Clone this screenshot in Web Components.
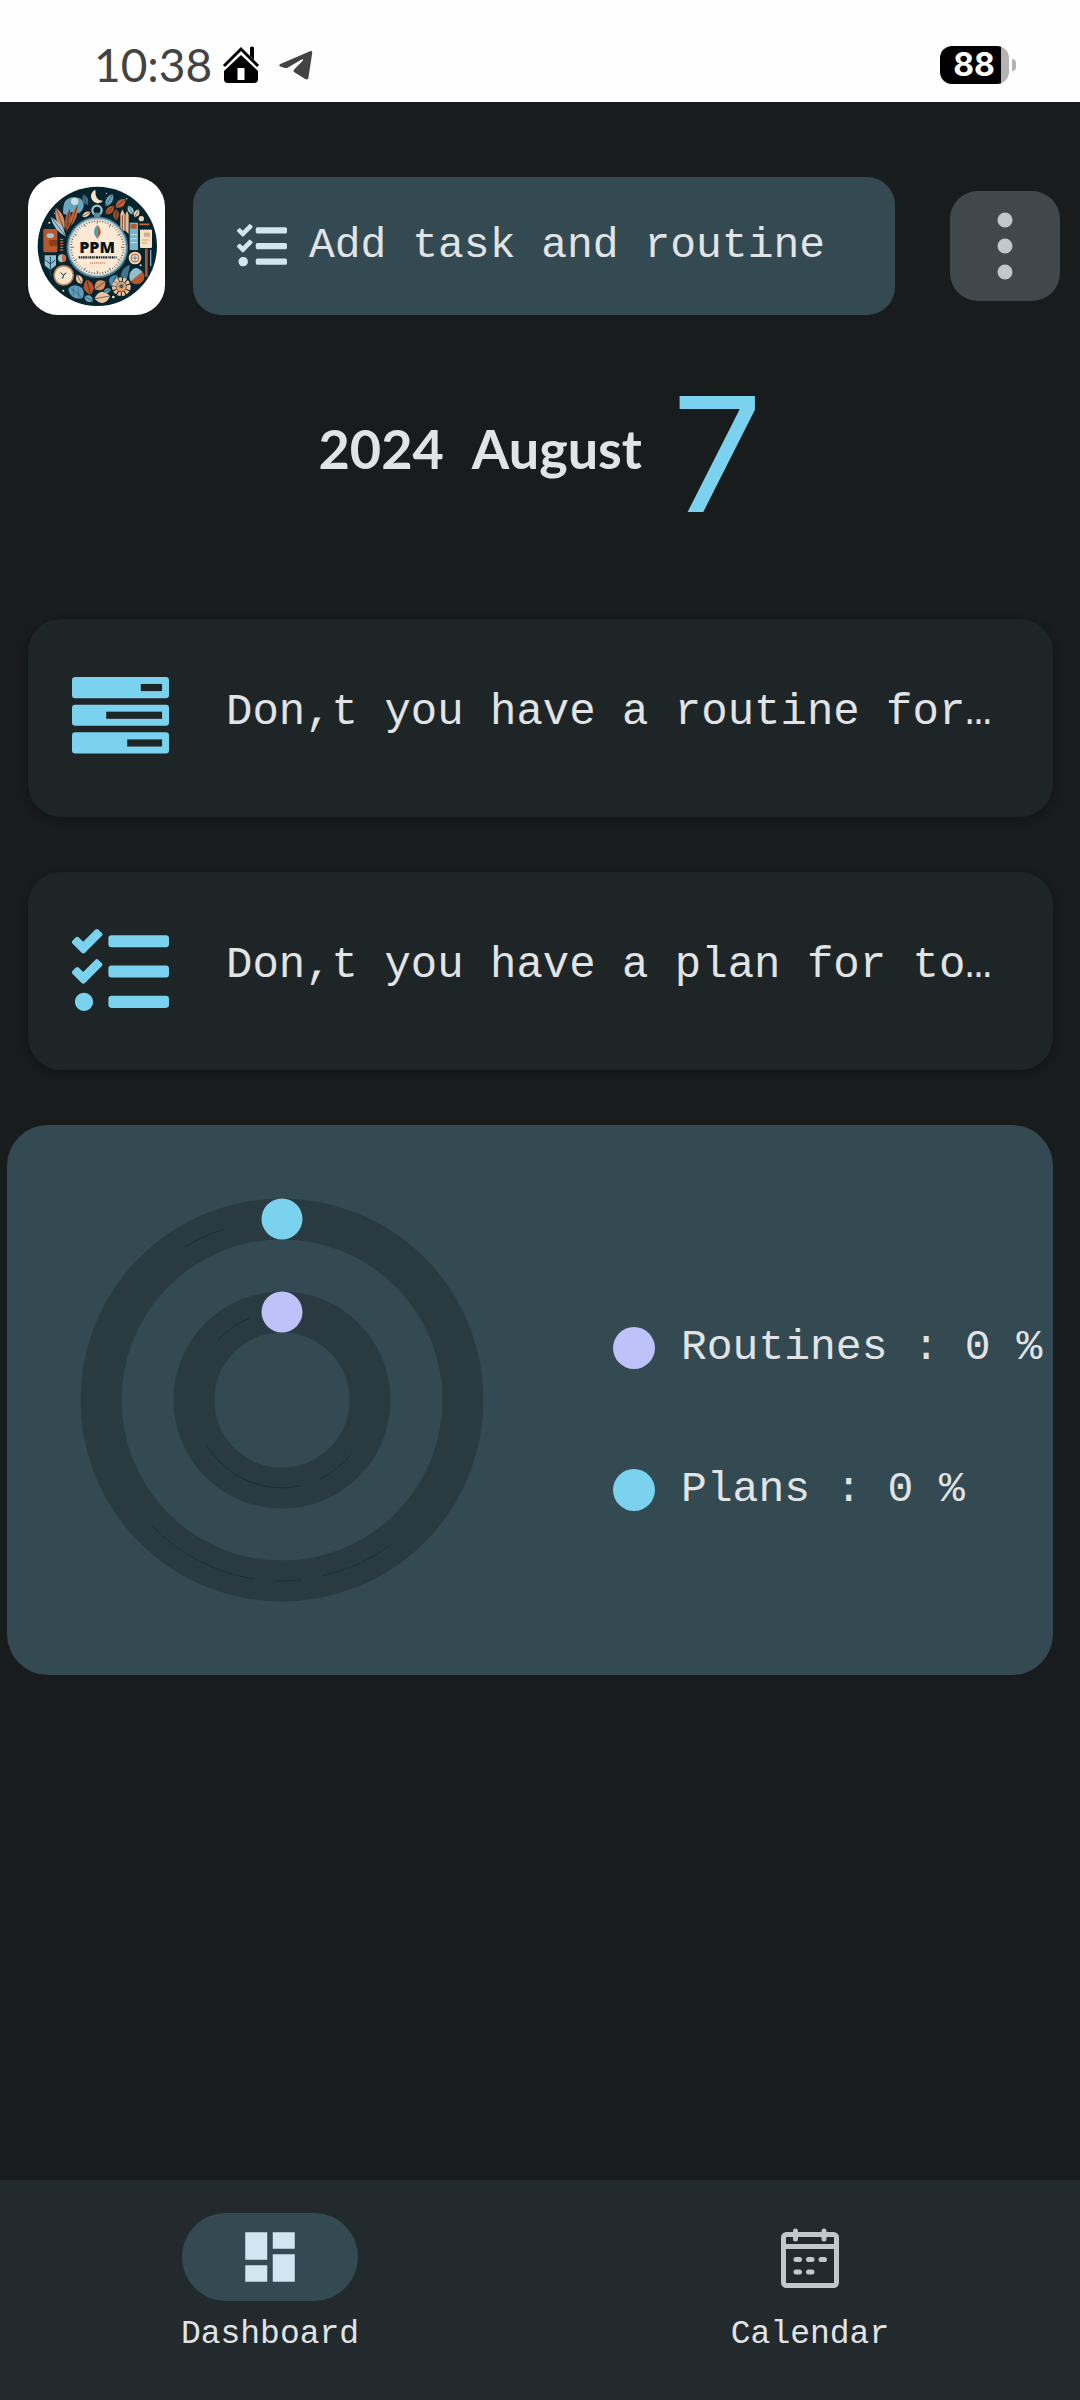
<!DOCTYPE html>
<html lang="en">
<head>
<meta charset="utf-8">
<meta name="viewport" content="width=device-width, initial-scale=1">
<title>PPM – Dashboard</title>
<style>
  :root {
    --bg: #191c1d;
    --card: #1e2527;
    --panel: #334a52;
    --nav: #222a2d;
    --ring: #2a3a41;
    --sky: #7bd2ee;
    --lilac: #bdc2f9;
    --pale: #d0e6f1;
    --muted: #c0c8cc;
    --text: #e1e3e4;
    --mono: "Liberation Mono", monospace;
    --round: Lato, sans-serif;
  }
  body { margin: 0; background: var(--bg); color: var(--text); font-family: var(--mono); }
</style>
</head>
<body>
<planner-app>
  <status-bar slot="status" time="10:38" battery="88"></status-bar>
  <app-header slot="header">Add task and routine</app-header>
  <date-title year="2024" month="August" day="7"></date-title>
  <empty-card icon="bars">Don,t you have a routine for…</empty-card>
  <empty-card icon="checks">Don,t you have a plan for to…</empty-card>
  <progress-panel>
    <legend-item>Routines : 0 %</legend-item>
    <legend-item tone="plans">Plans : 0 %</legend-item>
  </progress-panel>
  <nav-bar slot="nav">
    <nav-item icon="dashboard" href="#dashboard" active>Dashboard</nav-item>
    <nav-item icon="calendar" href="#calendar">Calendar</nav-item>
  </nav-bar>
</planner-app>

<script>
const ICONS = {
  checks: `<svg viewBox="0 0 512 512" fill="currentColor" aria-hidden="true"><path d="M139.61 35.5a12 12 0 0 0-17 0L58.93 98.81l-22.7-22.12a12 12 0 0 0-17 0L3.53 92.41a12 12 0 0 0 0 17l47.59 47.4a12.78 12.78 0 0 0 17.61 0l15.59-15.62L156.52 69a12.09 12.09 0 0 0 .09-17zm0 159.19a12 12 0 0 0-17 0l-63.68 63.72-22.7-22.1a12 12 0 0 0-17 0L3.53 252a12 12 0 0 0 0 17L51 316.5a12.77 12.77 0 0 0 17.6 0l15.7-15.69 72.2-72.22a12 12 0 0 0 .09-16.9zM64 368c-26.49 0-48.59 21.5-48.59 48S37.53 464 64 464a48 48 0 0 0 0-96zm432 16H208a16 16 0 0 0-16 16v32a16 16 0 0 0 16 16h288a16 16 0 0 0 16-16v-32a16 16 0 0 0-16-16zm0-320H208a16 16 0 0 0-16 16v32a16 16 0 0 0 16 16h288a16 16 0 0 0 16-16V80a16 16 0 0 0-16-16zm0 160H208a16 16 0 0 0-16 16v32a16 16 0 0 0 16 16h288a16 16 0 0 0 16-16v-32a16 16 0 0 0-16-16z"/></svg>`,
  bars: `<svg viewBox="0 -128 1792 1792" aria-hidden="true"><g fill="currentColor"><rect y="0" width="1792" height="392" rx="60"/><rect y="512" width="1792" height="392" rx="60"/><rect y="1024" width="1792" height="392" rx="60"/></g><g fill="var(--card)"><rect x="1272" y="130" width="392" height="132"/><rect x="632" y="642" width="1032" height="132"/><rect x="1020" y="1154" width="644" height="132"/></g></svg>`,
  dashboard: `<svg viewBox="0 0 24 24" fill="currentColor" aria-hidden="true"><path d="M3 13h8V3H3v10zm0 8h8v-6H3v6zm10 0h8V11h-8v10zm0-18v6h8V3h-8z"/></svg>`,
  calendar: `<svg viewBox="0 0 66 66" fill="none" stroke="currentColor" stroke-width="5" stroke-linecap="round" aria-hidden="true"><rect x="6.5" y="10.5" width="53" height="51" rx="3"/><path d="M6.5 22.5h53M18.5 7v8M47 7v8M19 35.5h3.5M31.5 35.5h3.5M44 35.5h3.5M19 48h3.5M31.5 48h3.5"/></svg>`
};

const define = (name, render) => customElements.define(name, class extends HTMLElement {
  connectedCallback() {
    if (this.shadowRoot) return;
    this.attachShadow({ mode: 'open' }).innerHTML = render(this);
  }
});

define('planner-app', () => `
  <style>
    :host { display: flex; flex-direction: column; min-height: 100vh; }
    main { display: flex; flex-direction: column; gap: 55px; padding: 0 27px 55px 28px; }
    ::slotted([slot="nav"]) { margin-top: auto; }
  </style>
  <slot name="status"></slot>
  <slot name="header"></slot>
  <main><slot></slot></main>
  <slot name="nav"></slot>`);

define('status-bar', el => `
  <style>
    :host { display: flex; align-items: center; justify-content: space-between; height: 102px;
      box-sizing: border-box; padding: 27px 64px 0 94px; background: #fefefe; color: #434343; }
    .left { display: flex; align-items: center; gap: 10px; }
    time { font: 400 46px/56px var(--round); }
    svg { display: block; }
    .plane { margin-left: 9px; }
    .battery { display: flex; align-items: center; gap: 3px; }
    .cell { display: flex; align-items: center; justify-content: center; box-sizing: border-box; width: 69px; height: 38px;
      padding-right: 1px; border-radius: 12px; background: linear-gradient(90deg, #000 61px, #b3b3b3 61px);
      color: #fff; font: 700 32px/38px Inter, sans-serif; }
    .tip { width: 4px; height: 12px; border-radius: 0 4px 4px 0; background: #b3b3b3; }
  </style>
  <div class="left">
    <time>${el.getAttribute('time')}</time>
    <svg width="38" height="38" viewBox="0 0 38 38" aria-hidden="true">
      <path d="M2 20 19 3l17 17" fill="none" stroke="#000" stroke-width="3"/>
      <path d="M28 1.500q2-2 4 0V14l-4-4z" fill="#000"/>
      <path d="M19 9 36 25v8q0 4-4 4H6q-4 0-4-4v-8z" fill="#000"/>
      <rect x="15.500" y="22" width="7" height="12" fill="#fefefe"/>
    </svg>
    <svg class="plane" width="34" height="30" viewBox="0 0 34 30" fill="#434343" aria-hidden="true">
      <path d="M1.300 14 31 1.200q2.500-.8 2.200 1.800L29.500 27.500q-.7 3-3.300 1.600L15.800 22.500q-2.400-1.600-.2-3.600L24 10.500q.6-1.800-1.400-1L9 17.500q-1.500.9-3.200.4L1.300 16.400q-2.200-1 0-2.400z"/>
    </svg>
  </div>
  <div class="battery"><span class="cell">${el.getAttribute('battery')}</span><span class="tip"></span></div>`);

define('ppm-logo', () => {
  const ticks = Array.from({ length: 60 }, (_, i) =>
    `<path d="M262 181v${i % 5 ? 5 : 10}" transform="rotate(${i * 6} 262 262)"/>`).join('');
  const leaf = (x, y, rot, len, wid, fill) =>
    `<g transform="translate(${x} ${y}) rotate(${rot})"><path d="M0 ${-len}Q${wid} 0 0 ${len}Q${-wid} 0 0 ${-len}z" fill="${fill}"/><path d="M0 ${-len}V${len}" stroke="#0a2730" stroke-width="1.500"/></g>`;
  return `
  <style>
    :host { display: block; width: 137px; height: 138px; flex: none; border-radius: 30px; background: #fff; overflow: hidden; }
    svg { display: block; width: 100%; height: 100%; }
    text { font-family: "Open Sans", sans-serif; font-weight: 800; }
  </style>
  <svg viewBox="54 51 411 414" role="img" aria-label="PPM">
    <circle cx="262" cy="259" r="179" fill="#06242d"/>
    <path d="M160 140q2-22 25-28 30-4 36 18 2 22-16 30l-20-4q-12 16-26 4z" fill="#6ba5bf"/>
    <circle cx="194" cy="124" r="11" fill="#cfe0dc"/>
    <path d="M256 89a21 21 0 1 0 23 34q-24 0-23-34z" fill="#f6e3c6"/>
    <g>
      ${leaf(150, 176, -20, 36, 22, '#d98d63')}
      ${leaf(145, 200, -38, 38, 18, '#9fc9d8')}
      ${leaf(174, 182, 8, 34, 18, '#b3532c')}
      ${leaf(192, 168, 18, 32, 16, '#c56a3d')}
      ${leaf(298, 120, 30, 22, 20, '#6ba5bf')}
      ${leaf(226, 120, -20, 18, 16, '#43788f')}
      ${leaf(229, 163, 60, 15, 14, '#f0cfae')}
      ${leaf(300, 150, 45, 18, 20, '#b3532c')}
      ${leaf(332, 130, 50, 20, 22, '#c0603a')}
      ${leaf(318, 164, 0, 18, 18, '#9c4a2c')}
      ${leaf(362, 150, -30, 16, 16, '#9fc9d8')}
      ${leaf(380, 160, 30, 14, 16, '#f0cfae')}
      ${leaf(208, 358, -30, 16, 20, '#efc2a2')}
      ${leaf(236, 382, -15, 24, 30, '#b3532c')}
      ${leaf(270, 376, 55, 20, 30, '#d98d63')}
      ${leaf(277, 412, 80, 24, 34, '#efc2a2')}
      ${leaf(236, 416, -60, 15, 20, '#6ba5bf')}
      ${leaf(312, 362, 20, 20, 30, '#4e8aa5')}
      ${leaf(292, 392, 70, 12, 14, '#6ba5bf')}
    </g>
    <path d="M176 384q18-16 40 0 10 14 2 30-22 6-36-10-8-8-6-20z" fill="#5f9cb8"/>
    <path d="M182 384l34 28M190 380l0 26M204 382l2 30" stroke="#2f6178" stroke-width="2"/>
    <rect x="100" y="207" width="42" height="70" rx="4" fill="#b9572f"/>
    <ellipse cx="121" cy="227" rx="11" ry="7" fill="#9fc9d8"/>
    <path d="M120 240h22v18h-22q-6-9 0-18z" fill="#8b3c1f"/>
    <path d="M104 286h34v30l-17 14-17-14z" fill="#8fc0d2"/><path d="M121 290v58M106 300l15 12 15-12" stroke="#1c4a5c" stroke-width="3" fill="none"/>
    <circle cx="156" cy="295" r="12" fill="#9fc9d8"/><path d="M156 283a12 12 0 0 1 0 24z" fill="#c56a3d"/>
    <path d="M155 236v40" stroke="#c56a3d" stroke-width="9" stroke-dasharray="4 4"/>
    <circle cx="161" cy="346" r="31" fill="#c58a62"/><circle cx="161" cy="346" r="26" fill="#f8e6cf"/>
    <path d="M161 346l-9-8m9 8 7-8m-7 8-4 10" stroke="#06242d" stroke-width="3"/>
    <path d="M331 162l6-14 7 14v50h-13zM346 164l5-12 5 12v58l-10-10z" fill="#e8bb94"/><path d="M337 166v44" stroke="#8b4a30" stroke-width="3"/>
    <rect x="359" y="188" width="25" height="82" fill="#78b4ca"/><rect x="362" y="192" width="18" height="14" fill="#b9572f"/><path d="M361 224h20M361 236h20M361 248h20" stroke="#bfe0e9" stroke-width="3"/>
    <rect x="390" y="208" width="36" height="56" rx="3" fill="#f6e3c6"/><path d="M392 207h34" stroke="#06242d" stroke-width="6" stroke-dasharray="3 3"/><rect x="402" y="218" width="18" height="12" fill="#e0a683"/><path d="M396 240h22M396 249h16" stroke="#b98a6c" stroke-width="2"/>
    <path d="M388 193h30" stroke="#c56a3d" stroke-width="5"/><circle cx="394" cy="176" r="8" fill="#efd4b4"/>
    <circle cx="375" cy="294" r="19" fill="#f3dabb"/><circle cx="375" cy="294" r="12" fill="none" stroke="#b9572f" stroke-width="3"/><path d="M367 294h16M375 286v16" stroke="#4e8aa5" stroke-width="3"/>
    <path d="M409 266v84" stroke="#b3532c" stroke-width="8"/><path d="M422 270v48" stroke="#78b4ca" stroke-width="4"/>
    <circle cx="380" cy="350" r="23" fill="#b9572f"/><path d="M362 336q16-24 34 0l-34 28q-6-14 0-28z" fill="#8fc0d2"/>
    <path d="M332 348q4-26 28-34-6 32-10 44z" fill="#3f7790"/>
    <circle cx="334" cy="380" r="22" fill="none" stroke="#efc196" stroke-width="12" stroke-dasharray="9 3"/><circle cx="334" cy="380" r="15" fill="#e09a69"/><circle cx="334" cy="379" r="6" fill="#315e73"/>
    <g fill="#f6e3c6"><circle cx="134" cy="160" r="2"/><circle cx="118" cy="188" r="3"/><circle cx="290" cy="100" r="2"/><circle cx="392" cy="316" r="3"/><circle cx="310" cy="411" r="4"/><circle cx="160" cy="392" r="3"/><circle cx="350" cy="116" r="2"/><circle cx="248" cy="146" r="2"/></g>
    <circle cx="261" cy="151" r="14" fill="none" stroke="#9dbfca" stroke-width="7"/><rect x="252" y="158" width="19" height="16" fill="#5d8797"/>
    <circle cx="262" cy="262" r="88" fill="#fbe9d6" stroke="#4f7f92" stroke-width="8"/><circle cx="262" cy="262" r="85" fill="none" stroke="#a9cbd5" stroke-width="4"/>
    <g stroke="#2b2a28" stroke-width="2">${ticks}</g>
    <path d="M262 194q-20 20 0 43z" fill="#4f9ab5"/><path d="M262 194q20 20 0 43z" fill="#b9572f"/>
    <text x="261" y="280" font-size="48" text-anchor="middle" fill="#0b1216">PPM</text>
    <path d="M206 292h114" stroke="#1d2528" stroke-width="7" stroke-dasharray="5 2 3 2 6 2"/>
    <path d="M240 309h45" stroke="#d98d63" stroke-width="5" stroke-dasharray="4 2"/>
  </svg>`;
});

define('app-header', () => `
  <style>
    :host { display: flex; align-items: center; padding: 75px 20px 0 28px; gap: 28px; }
    button { border: 0; margin: 0; padding: 0; cursor: pointer; border-radius: 28px; display: flex; align-items: center; }
    .add { flex: 1; min-width: 0; height: 138px; padding: 0 44px; gap: 22px; background: var(--panel); color: var(--text);
      font: 43px/56px var(--mono); white-space: nowrap; }
    .add svg { width: 50px; height: 50px; flex: none; color: var(--pale); }
    .more { width: 110px; height: 110px; flex: none; margin-left: 27px; justify-content: center; background: #41484b; color: var(--muted); }
  </style>
  <ppm-logo></ppm-logo>
  <button class="add" type="button">${ICONS.checks}<span><slot></slot></span></button>
  <button class="more" type="button" aria-label="More options">
    <svg width="16" height="68" viewBox="0 0 16 68" fill="currentColor" aria-hidden="true"><circle cx="8" cy="8" r="7.500"/><circle cx="8" cy="34" r="7.500"/><circle cx="8" cy="60" r="7.500"/></svg>
  </button>`);

define('date-title', el => `
  <style>
    :host { display: block; }
    h1 { display: flex; align-items: center; justify-content: center; gap: 30px; height: 249px; margin: 0;
      box-sizing: border-box; padding-top: 28px; font: 700 54px/64px var(--round); color: var(--text); }
    .day { font: 400 160px/200px Inter, sans-serif; color: var(--sky); }
    .ym { display: flex; gap: 28px; padding-bottom: 10px; }
  </style>
  <h1><span class="ym"><span>${el.getAttribute('year')}</span> <span>${el.getAttribute('month')}</span></span>
  <span class="day">${el.getAttribute('day')}</span></h1>`);

define('empty-card', el => `
  <style>
    :host { display: flex; align-items: center; gap: 57px; height: 198px; box-sizing: border-box; padding: 0 44px;
      border-radius: 33px; background: var(--card); box-shadow: 0 3px 8px rgba(0, 0, 0, .3); }
    svg { display: block; width: 97px; height: 97px; flex: none; color: var(--sky); }
    p { margin: 0; padding-bottom: 12px; min-width: 0; overflow: hidden; white-space: nowrap; font-size: 44px; line-height: 56px; }
  </style>
  ${ICONS[el.getAttribute('icon')]}
  <p><slot></slot></p>`);

define('progress-panel', () => `
  <style>
    :host { display: flex; align-items: center; gap: 129px; height: 550px; box-sizing: border-box; padding-left: 73px;
      margin-left: -21px; border-radius: 41px; background: var(--panel); }
    svg { display: block; width: 404px; height: 404px; flex: none; }
    .legend { display: flex; flex-direction: column; gap: 86px; padding-top: 37px; }
  </style>
  <svg viewBox="-202 -202 404 404" fill="none" role="img" aria-label="Progress">
    <g stroke="var(--ring)" stroke-width="41"><circle r="181"/><circle r="88"/></g>
    <g stroke="#1c282d" stroke-width="1" opacity=".7">
      <path d="M-130 126A181 181 0 0 0-28 179M-6 181A181 181 0 0 0 20 180M40 176A181 181 0 0 0 110 144M-97-153A181 181 0 0 1-58-171"/>
      <path d="M-75 46A88 88 0 0 0 18 86M38 79A88 88 0 0 0 70 53M-64-60A88 88 0 0 1-32-82"/>
    </g>
    <circle cy="-181" r="20.500" fill="var(--sky)"/>
    <circle cy="-88" r="20.500" fill="var(--lilac)"/>
  </svg>
  <div class="legend"><slot></slot></div>`);

define('legend-item', () => `
  <style>
    :host { --dot: var(--lilac); display: flex; align-items: center; gap: 26px; white-space: nowrap; font-size: 43px; line-height: 56px; }
    :host([tone="plans"]) { --dot: var(--sky); }
    i { width: 42px; height: 42px; flex: none; border-radius: 50%; background: var(--dot); }
  </style>
  <i></i><span><slot></slot></span>`);

define('nav-bar', () => `
  <style>
    :host { display: block; background: var(--nav); }
    nav { display: grid; grid-template-columns: 1fr 1fr; height: 220px; }
  </style>
  <nav><slot></slot></nav>`);

define('nav-item', el => `
  <style>
    :host { display: block; }
    a { display: flex; flex-direction: column; align-items: center; gap: 14px; padding-top: 33px; color: var(--text);
      text-decoration: none; font-size: 33px; line-height: 40px; }
    .pill { display: flex; align-items: center; justify-content: center; width: 176px; height: 88px; border-radius: 44px; color: var(--muted); }
    :host([active]) .pill { background: var(--panel); color: var(--pale); }
    svg { width: 66px; height: 66px; }
  </style>
  <a href="${el.getAttribute('href')}"${el.hasAttribute('active') ? ' aria-current="page"' : ''}><span class="pill">${ICONS[el.getAttribute('icon')]}</span><slot></slot></a>`);
</script>
</body>
</html>
